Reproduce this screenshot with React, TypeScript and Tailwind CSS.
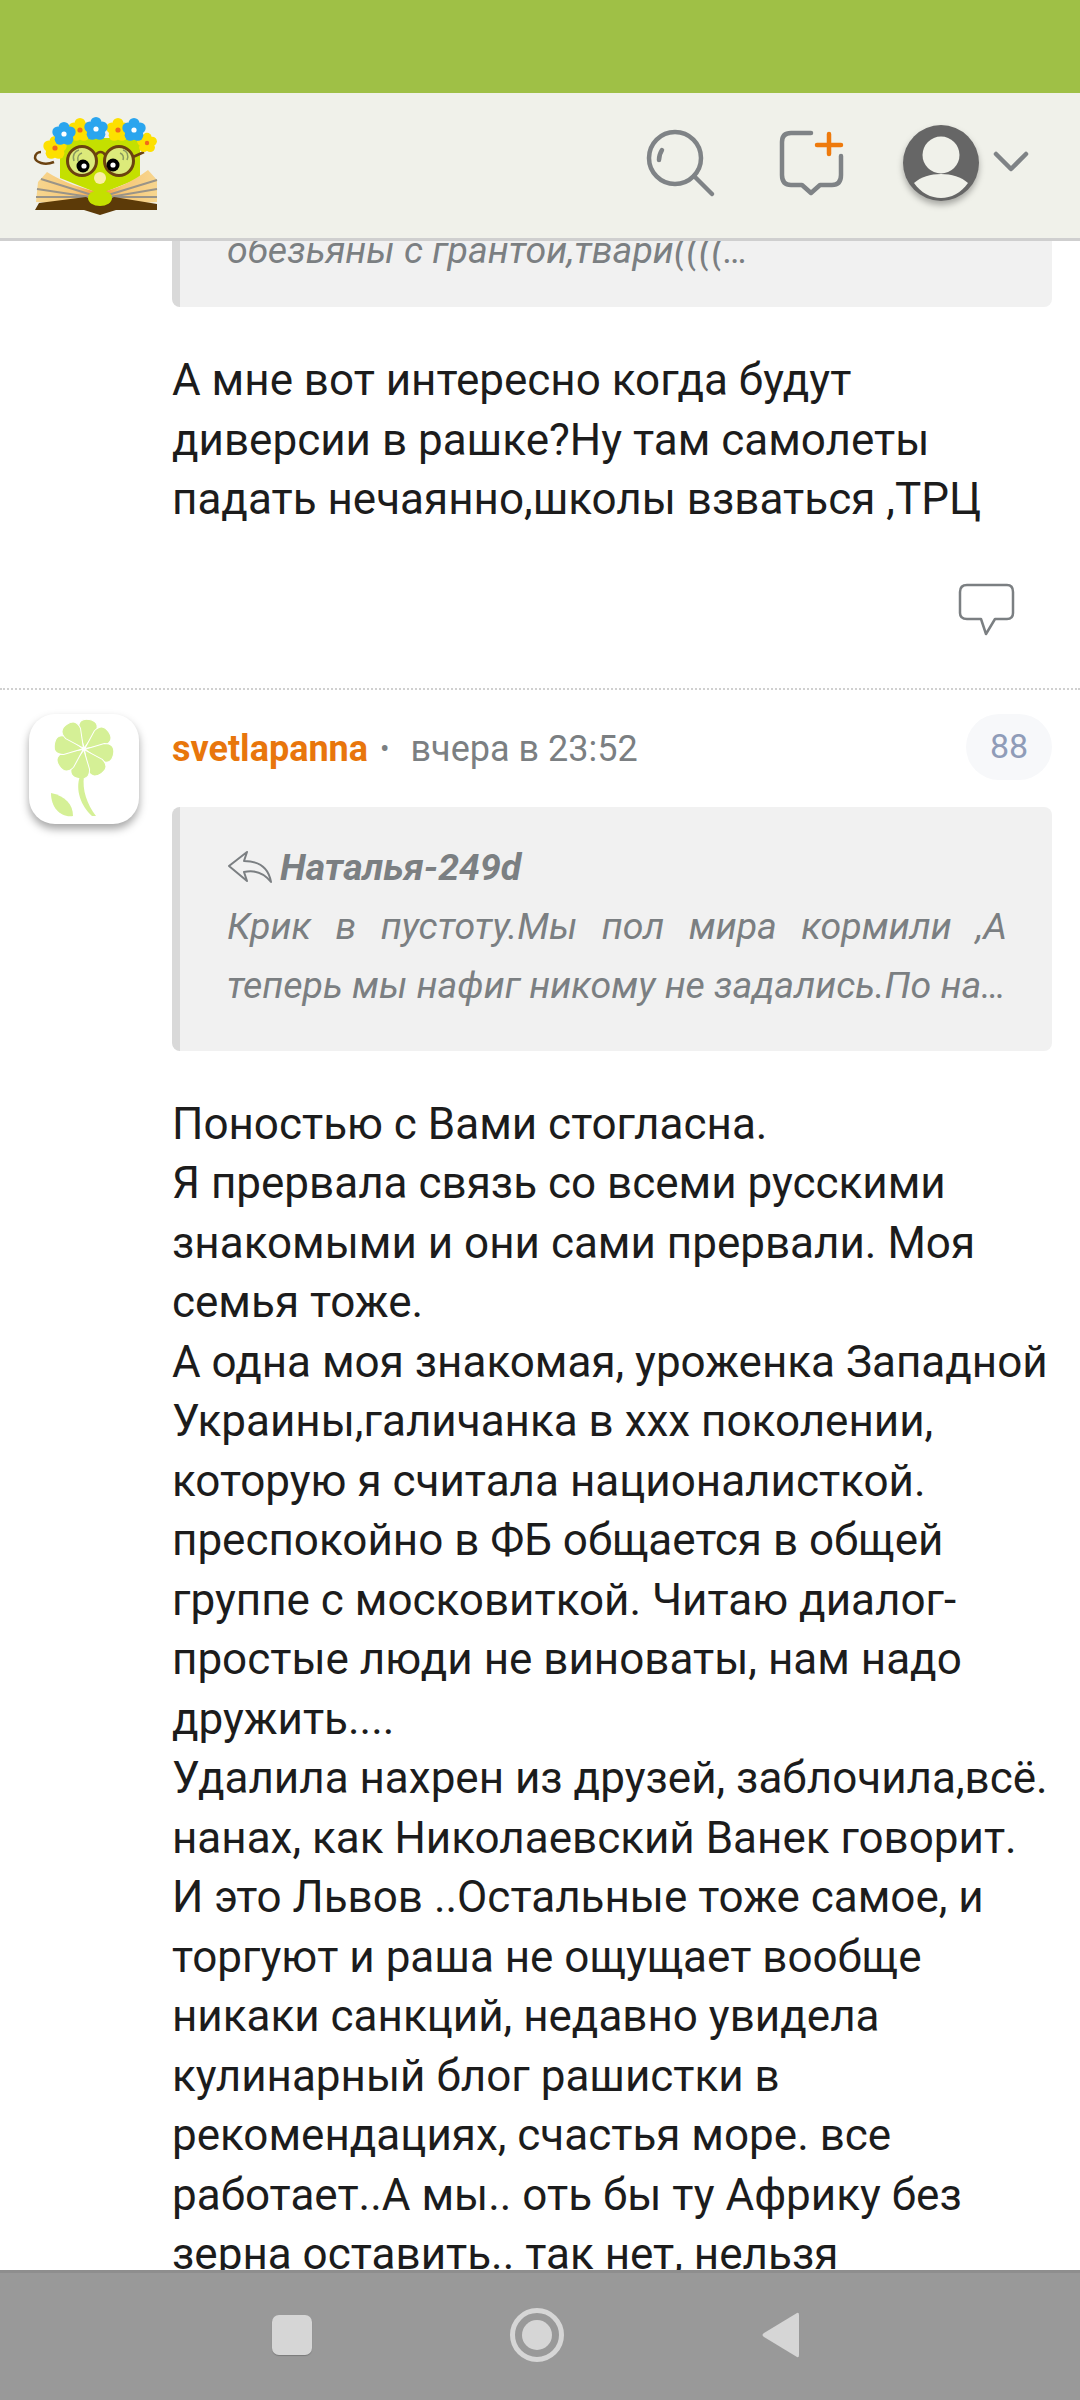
import React from 'react';

const FONT = "font-['Roboto',sans-serif]";

// 5 petal flower for the logo wreath
const Blossom = ({ x, y, r, petal, core }: { x: number; y: number; r: number; petal: string; core: string }) => (
    <g>
        {[0, 72, 144, 216, 288].map((deg) => {
            const rad = ((deg - 90) * Math.PI) / 180;
            return <circle key={deg} cx={x + Math.cos(rad) * r} cy={y + Math.sin(rad) * r} r={r * 0.85} fill={petal} />;
        })}
        <circle cx={x} cy={y} r={r * 0.4} fill={core} />
    </g>
);

const Logo = () => (
    <svg width="160" height="120" viewBox="0 0 160 120" className="shrink-0">
        <defs>
            <linearGradient id="page-left" x1="0" y1="0" x2="1" y2="0">
                <stop offset="0%" stopColor="#f7d68f" />
                <stop offset="60%" stopColor="#f7c878" />
                <stop offset="100%" stopColor="#f0913a" />
            </linearGradient>
            <linearGradient id="page-right" x1="1" y1="0" x2="0" y2="0">
                <stop offset="0%" stopColor="#f7d68f" />
                <stop offset="60%" stopColor="#f7c878" />
                <stop offset="100%" stopColor="#f0913a" />
            </linearGradient>
        </defs>
        <path d="M34 60C24 64 16 60 15 56C15 52 18 50 21 50" fill="none" stroke="#6b4210" strokeWidth="2.5" />
        <path d="M40 36H120V76L80 92L40 76Z" fill="#c4e000" />
        <path d="M16 100L18 80L27 70C42 80 62 86 80 91V104Z" fill="url(#page-left)" />
        <path d="M137 100L137 78L128 68C112 80 98 86 80 91V104Z" fill="url(#page-right)" />
        <path d="M21 77L72 93M17 87L70 95M16 95H68M137 78L88 93M137 87L90 95M137 95H92" stroke="#9a9488" strokeWidth="2" fill="none" />
        <path d="M15 108L19 101L66 95L80 102L94 95L137 102V108H96L80 113L64 108Z" fill="#5c3a08" />
        <ellipse cx="80" cy="96" rx="12" ry="8" fill="#c4e000" />
        <circle cx="62" cy="59" r="14.5" fill="#dcea7a" stroke="#6b4210" strokeWidth="3" />
        <circle cx="99" cy="59" r="14.5" fill="#dcea7a" stroke="#6b4210" strokeWidth="3" />
        <path d="M76 53C78 49 83 49 85 53M113 55L124 50" fill="none" stroke="#6b4210" strokeWidth="2.5" />
        <path d="M54 59C52 53 55 49 59 48M58 59C57 55 59 52 62 51M107 58C109 53 107 49 103 48M103 58C104 55 103 52 100 51" fill="none" stroke="#8a9a60" strokeWidth="1.5" />
        <circle cx="63" cy="64" r="6.5" fill="#000" />
        <circle cx="64" cy="64" r="2.6" fill="#fff" />
        <circle cx="93" cy="63" r="6.5" fill="#000" />
        <circle cx="93" cy="63" r="2.6" fill="#fff" />
        <ellipse cx="80" cy="76" rx="6" ry="6" fill="#fbeea8" />
        <Blossom x={35} y={46} r={6.5} petal="#fde000" core="#f26a1b" />
        <Blossom x={127} y={41} r={5.5} petal="#fde000" core="#f26a1b" />
        <Blossom x={60} y={28} r={6.5} petal="#fde000" core="#f26a1b" />
        <Blossom x={98} y={28} r={6.5} petal="#fde000" core="#f26a1b" />
        <Blossom x={44} y={32} r={6.5} petal="#2aa5ee" core="#ffffff" />
        <Blossom x={76} y={27} r={6.5} petal="#2aa5ee" core="#ffffff" />
        <Blossom x={114} y={28} r={6.5} petal="#2aa5ee" core="#ffffff" />
    </svg>
);

const SearchIcon = () => (
    <svg width="80" height="80" viewBox="0 0 80 80" fill="none" stroke="#7f8386" strokeWidth="4.5" strokeLinecap="round" className="mb-[3px]">
        <circle cx="35" cy="38" r="26" />
        <path d="M54 56l18 18" />
        <path d="M19 40c0-4 1-7 3-10" />
    </svg>
);

const NewCommentIcon = () => (
    <svg width="76" height="70" viewBox="0 0 76 70" fill="none" strokeLinecap="round" strokeLinejoin="round" className="ml-[55px] mt-[6px]">
        <path d="M36 3H16Q7 3 7 12V45Q7 55 16 55H27L36 63L45 55H57Q66 55 66 45V26" stroke="#7f8386" strokeWidth="4.5" />
        <path d="M54 4V24M42 15H66" stroke="#ee7a0c" strokeWidth="4.5" />
    </svg>
);

const UserIcon = () => (
    <svg width="84" height="88" viewBox="0 0 84 88" className="ml-[48px] mt-[6px] drop-shadow-[0_4px_3px_rgba(0,0,0,0.3)]">
        <circle cx="42" cy="42" r="38" fill="#666666" />
        <circle cx="42" cy="34" r="18.5" fill="#f0f1ea" />
        <path d="M15 62C28 50 56 50 69 62C62 72 52 77 42 77C32 77 22 72 15 62Z" fill="#f0f1ea" />
    </svg>
);

const ChevronIcon = () => (
    <svg width="36" height="24" viewBox="0 0 36 24" fill="none" stroke="#7f8386" strokeWidth="4.5" strokeLinecap="round" strokeLinejoin="round" className="ml-[10px]">
        <path d="M3 4L18 19L33 4" />
    </svg>
);

const CommentBubble = () => (
    <svg width="60" height="54" viewBox="0 0 60 54" fill="none" stroke="#7b7f82" strokeWidth="2.5" strokeLinejoin="round">
        <path d="M10 2H50Q56 2 56 9V30Q56 36 50 36H38L29 51L24 36H10Q3 36 3 30V9Q3 2 10 2Z" />
    </svg>
);

const ReplyIcon = () => (
    <svg width="46" height="34" viewBox="0 0 46 34" fill="none" stroke="#7b7f82" strokeWidth="2" strokeLinejoin="round" className="shrink-0">
        <path d="M20 2L2 16L20 31L17 22C26 20 36 22 44 32C42 20 34 11 17 11Z" />
    </svg>
);

const FlowerAvatar = () => {
    const petals = [0, 45, 90, 135, 180, 225, 270, 315];
    return (
        <div className="w-[110px] h-[110px] shrink-0 rounded-[26px] bg-white shadow-[0_5px_8px_rgba(0,0,0,0.35)]">
            <svg width="110" height="110" viewBox="0 0 110 110">
                {petals.map((deg) => (
                    <path
                        key={deg}
                        d="M55 34L46 16Q44 5 55 5Q66 5 64 16Z"
                        fill="#d5f096"
                        stroke="#ffffff"
                        strokeWidth="1"
                        transform={`rotate(${deg + 10} 55 35)`}
                    />
                ))}
                <path d="M51 62C46 76 52 92 63 102L67 102C58 90 53 76 55 62Z" fill="#d5f096" />
                <path d="M22 79C36 82 44 90 44 102C32 104 22 94 22 79Z" fill="#d5f096" />
            </svg>
        </div>
    );
};

const App: React.FC = () => {
    const body = [
        'Поностью с Вами стогласна.',
        'Я прервала связь со всеми русскими знакомыми и они сами прервали. Моя семья тоже.',
        'А одна моя знакомая, уроженка Западной Украины,галичанка в ххх поколении, которую я считала националисткой. преспокойно в ФБ общается в общей группе с московиткой. Читаю диалог- простые люди не виноваты, нам надо дружить....',
        'Удалила нахрен из друзей, заблочила,всё. нанах, как Николаевский Ванек говорит.',
        'И это Львов ..Остальные тоже самое, и торгуют и раша не ощущает вообще никаки санкций, недавно увидела кулинарный блог рашистки в рекомендациях, счастья море. все работает..А мы.. оть бы ту Африку без зерна оставить.. так нет, нельзя',
    ];

    return (
        <div className={`${FONT} w-[1080px] h-[2400px] flex flex-col overflow-hidden bg-white`}>
            {/* Status bar */}
            <div className="h-[93px] shrink-0 bg-[#9fc046]" />

            {/* Header */}
            <header className="relative z-10 h-[148px] shrink-0 flex items-center pl-5 pr-[51px] pb-[8px] bg-[#f0f1ea] border-b-[3px] border-[#cfcfcf]">
                <Logo />
                <div className="ml-auto flex items-center">
                    <SearchIcon />
                    <NewCommentIcon />
                    <UserIcon />
                    <ChevronIcon />
                </div>
            </header>

            {/* Scrolled content */}
            <main className="flex-1 min-h-0 overflow-hidden">
                {/* First comment, scrolled under the header */}
                <div className="pl-[172px] pr-7">
                    <div className="-mt-[60px] h-[126px] pl-[47px] pr-[45px] pt-[40px] rounded-lg bg-[#f1f1f1] border-l-[8px] border-[#d9d9d9] text-[37.5px] leading-[59px] italic text-[#7b7f82]">
                        обезьяны с грантой,твари((((…
                    </div>
                    <p className="mt-[44px] text-[44px] leading-[59.5px] text-[#1c1c1c]">
                        А мне вот интересно когда будут диверсии в рашке?Ну там самолеты падать нечаянно,школы взваться ,ТРЦ
                    </p>
                    <div className="mt-[53px] flex justify-end pr-[35px]">
                        <CommentBubble />
                    </div>
                </div>

                <div className="mt-[51px] border-t-2 border-dotted border-[#d0d0d0]" />

                {/* Second comment */}
                <article className="flex pl-[29px] pr-7 pt-6">
                    <FlowerAvatar />
                    <div className="ml-[33px] flex-1 min-w-0">
                        <div className="flex items-start">
                            <div className="flex items-center h-[70px] text-[36px]">
                                <span className="font-bold text-[#e8760c]">svetlapanna</span>
                                <span className="ml-3 mr-[21px] text-[#7b7f82] text-[28px]">•</span>
                                <span className="text-[#7b7f82]">вчера в 23:52</span>
                            </div>
                            <div className="ml-auto w-[86px] h-[66px] rounded-[33px] bg-[#f7f8fa] flex items-center justify-center text-[34px] text-[#8f9cb8]">
                                88
                            </div>
                        </div>

                        <div className="mt-[23px] h-[244px] pl-[47px] pr-[45px] pt-[31px] rounded-lg bg-[#f1f1f1] border-l-[8px] border-[#d9d9d9] italic text-[37.5px] leading-[59px] text-[#7b7f82]">
                            <div className="flex items-center gap-[7px] h-[59px] font-bold">
                                <ReplyIcon />
                                <span>Наталья-249d</span>
                            </div>
                            <p className="text-justify">
                                Крик в пустоту.Мы пол мира кормили ,А теперь мы нафиг никому не задались.По на…
                            </p>
                        </div>

                        <div className="mt-[44px] text-[44px] leading-[59.5px] text-[#1c1c1c]">
                            {body.map((line) => (
                                <p key={line}>{line}</p>
                            ))}
                        </div>
                    </div>
                </article>
            </main>

            {/* Android nav bar */}
            <nav className="relative z-10 h-[130px] shrink-0 flex items-center justify-center bg-[#999999] border-t-[3px] border-[#8e8e8e] pr-[7px] pb-[3px]">
                <div className="w-10 h-10 rounded-[7px] bg-[#d6d6d6] shadow-[0_1px_1px_rgba(0,0,0,0.2)]" />
                <div className="ml-[198px] w-[54px] h-[54px] rounded-full border-[5px] border-[#d6d6d6] flex items-center justify-center">
                    <div className="w-[30px] h-[30px] rounded-full bg-[#d6d6d6]" />
                </div>
                <svg width="40" height="48" viewBox="0 0 40 48" className="ml-[197px]">
                    <path d="M36 2Q38 1 38 4V44Q38 47 36 46L3 26Q0 24 3 22Z" fill="#d6d6d6" />
                </svg>
            </nav>
        </div>
    );
};

export default App;
